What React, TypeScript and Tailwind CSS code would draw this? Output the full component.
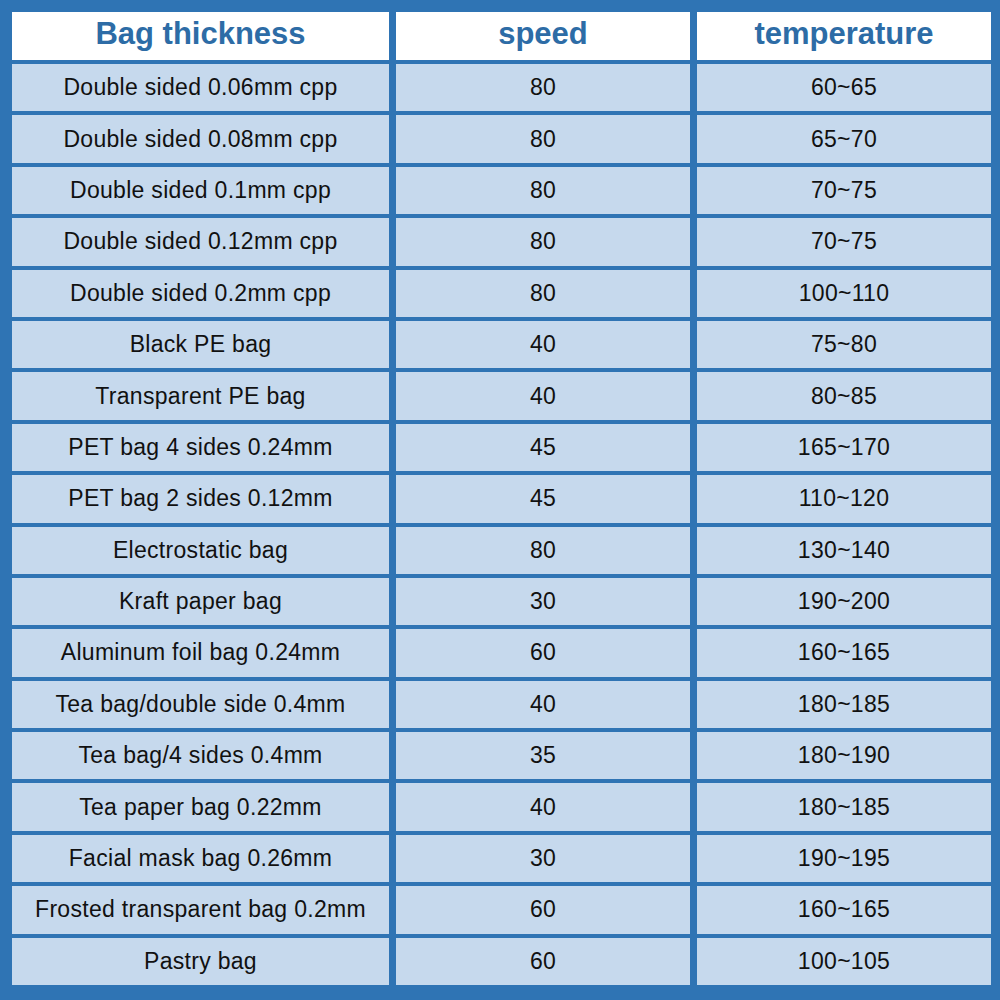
const rows: [string, string, string][] = [
  ["Double sided 0.06mm cpp", "80", "60~65"],
  ["Double sided 0.08mm cpp", "80", "65~70"],
  ["Double sided 0.1mm cpp", "80", "70~75"],
  ["Double sided 0.12mm cpp", "80", "70~75"],
  ["Double sided 0.2mm cpp", "80", "100~110"],
  ["Black PE bag", "40", "75~80"],
  ["Transparent PE bag", "40", "80~85"],
  ["PET bag 4 sides 0.24mm", "45", "165~170"],
  ["PET bag 2 sides 0.12mm", "45", "110~120"],
  ["Electrostatic bag", "80", "130~140"],
  ["Kraft paper bag", "30", "190~200"],
  ["Aluminum foil bag 0.24mm", "60", "160~165"],
  ["Tea bag/double side 0.4mm", "40", "180~185"],
  ["Tea bag/4 sides 0.4mm", "35", "180~190"],
  ["Tea paper bag 0.22mm", "40", "180~185"],
  ["Facial mask bag 0.26mm", "30", "190~195"],
  ["Frosted transparent bag 0.2mm", "60", "160~165"],
  ["Pastry bag", "60", "100~105"],
];

const headers = ["Bag thickness", "speed", "temperature"];

export default function App() {
  return (
    <div className="w-[1000px] h-[1000px] bg-[#2f74b4] pt-[12px] pl-[12px] font-['Liberation_Sans',Arial,sans-serif]">
      <div className="grid grid-cols-[377px_294px_294px] grid-rows-[48px_repeat(18,1fr)] gap-x-[7px] gap-y-[4px] h-[973px] w-[979px]">
        {headers.map((h) => (
          <div
            key={h}
            className="bg-white flex items-center justify-center pb-[5px] text-[31px] font-bold text-[#2d6ca6] leading-none"
          >
            {h}
          </div>
        ))}
        {rows.map((r, i) =>
          r.map((c, j) => (
            <div
              key={`${i}-${j}`}
              className="bg-[#c6d9ed] flex items-center justify-center text-[23px] tracking-[0.3px] text-[#111] leading-none"
            >
              {c}
            </div>
          ))
        )}
      </div>
    </div>
  );
}
